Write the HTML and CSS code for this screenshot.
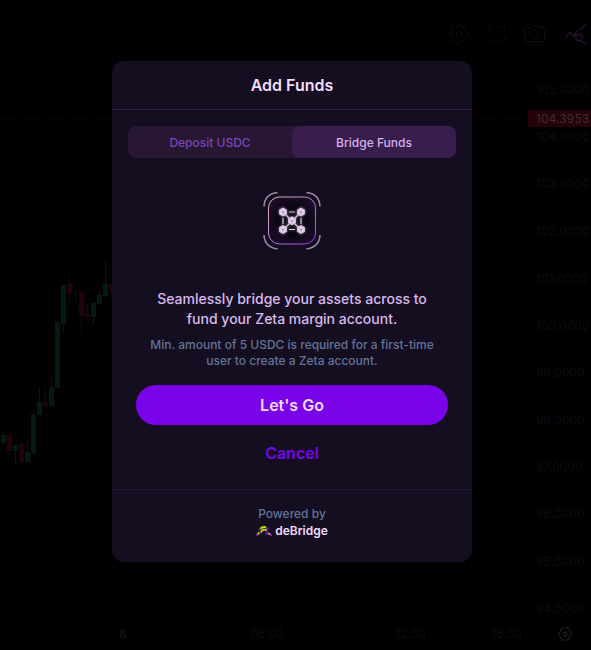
FILE: index.html
```html
<!DOCTYPE html>
<html lang="en">
<head>
<meta charset="utf-8">
<title>Add Funds</title>
<link rel="stylesheet" href="styles.css">
</head>
<body>
<svg class="chart" width="591" height="650" viewBox="0 0 591 650" aria-hidden="true">
  <path class="rule" d="M0 14.5H591M0 619.5H591"/>
  <g class="tool">
    <path d="M457.3 26.8l.4-2.3h2.6l.4 2.3 2.4 1 2-1.3 1.8 1.8-1.3 2 1 2.4 2.3.4v2.6l-2.3.4-1 2.4 1.3 2-1.8 1.8-2-1.3-2.4 1-.4 2.3h-2.6l-.4-2.3-2.4-1-2 1.3-1.8-1.8 1.3-2-1-2.4-2.3-.4v-2.6l2.3-.4 1-2.4-1.3-2 1.8-1.8 2 1.3z"/>
    <circle cx="459" cy="34" r="2.7"/>
    <path d="M494 26.500h-3.500q-1 0-1 1v3.500M500 26.500h3.500q1 0 1 1v3.500M489.500 37v3.500q0 1 1 1h3.500M504.500 37v3.500q0 1-1 1h-3.500"/>
    <path d="M526 27.500h4l1.500-2h6l1.500 2h4q1.500 0 1.500 1.500v11q0 1.500-1.500 1.500h-17q-1.500 0-1.500-1.500v-11q0-1.500 1.500-1.500z"/>
    <circle cx="534.5" cy="34.500" r="4.200"/>
  </g>
  <g class="insight">
    <path d="M565 39l4.500-6.500 4 4 4-6.500M579 31l6.500-6.500M581.500 40.500l4 3.500"/>
    <circle cx="579" cy="37.500" r="3.300"/>
  </g>
  <path class="price-line" d="M0 118.500H528"/>
  <rect class="price-tag" x="528" y="110" width="63" height="17"/>
  <g class="axis">
    <text x="536" y="94">105.0000</text>
    <text x="536" y="141">104.0000</text>
    <text x="536" y="188">103.0000</text>
    <text x="536" y="235">102.0000</text>
    <text x="536" y="283">101.0000</text>
    <text x="536" y="330">100.0000</text>
    <text x="536" y="377">99.0000</text>
    <text x="536" y="424">98.0000</text>
    <text x="536" y="471">97.0000</text>
    <text x="536" y="518">96.0000</text>
    <text x="536" y="566">95.0000</text>
    <text x="536" y="613">94.0000</text>
    <text x="250" y="638">06:00</text>
    <text x="395" y="638">12:00</text>
    <text x="491" y="638">16:00</text>
    <text class="day" x="119" y="638">8</text>
    <text class="current" x="536" y="123">104.3953</text>
  </g>
  <g class="up">
    <path d="M1 435h5v8h-5zM13 445h5v6h-5zM25 452h5v10h-5zM31 414h5v39h-5zM37 402h5v13h-5zM49 387h5v19h-5zM55 322h5v66h-5zM61 285h5v39h-5zM91 303h5v14h-5zM97 295h5v9h-5zM103 284h5v12h-5z"/>
    <path d="M3 432h1v12h-1zM15 445h1v20h-1zM27 438h1v24h-1zM33 410h1v43h-1zM39 388h1v27h-1zM51 377h1v29h-1zM57 321h1v68h-1zM63 285h1v46h-1zM93 303h1v22h-1zM99 291h1v14h-1zM105 261h1v36h-1z"/>
  </g>
  <g class="down">
    <path d="M7 435h5v16h-5zM19 444h5v18h-5zM43 402h5v4h-5zM67 284h5v9h-5zM73 292h5v1h-5zM79 292h5v24h-5zM85 314h5v3h-5zM109 284h5v7h-5z"/>
    <path d="M9 430h1v25h-1zM21 443h1v22h-1zM45 387h1v19h-1zM69 276h1v26h-1zM75 287h1v17h-1zM81 291h1v41h-1zM87 302h1v16h-1zM111 284h1v14h-1z"/>
  </g>
  <g class="axis-settings">
    <path d="M562 628h6l3.500 6-3.500 6h-6l-3.500-6z"/>
    <circle cx="565" cy="634" r="1.800"/>
  </g>
</svg>

<main class="modal">
  <header class="modal-header"><h1><span class="t-title">Add Funds</span></h1></header>
  <div class="tabs">
    <button class="tab"><span class="t-deposit">Deposit USDC</span></button>
    <button class="tab active"><span class="t-bridge">Bridge Funds</span></button>
  </div>
  <svg class="bridge-icon" width="60" height="60" viewBox="0 0 60 60" aria-hidden="true">
    <defs>
      <linearGradient id="edge" x1="0" y1="0" x2="1" y2="1">
        <stop offset="0" stop-color="#f4b8a8"/><stop offset=".45" stop-color="#b88ad0"/><stop offset="1" stop-color="#9a35f0"/>
      </linearGradient>
      <radialGradient id="core"><stop offset=".45" stop-color="#05020a"/><stop offset="1" stop-color="#180b25"/></radialGradient>
      <filter id="glow" x="-50%" y="-50%" width="200%" height="200%"><feGaussianBlur stdDeviation="1.500"/></filter>
      <g id="network">
        <path d="M21 21l18 18M39 21L21 39M27 21h6M27 38.500h6M21 27v6M39 27v6"/>
        <g class="nodes">
          <path id="node" d="M21 17.200l3.300 1.900v3.800L21 24.800l-3.300-1.900v-3.800z"/>
          <use href="#node" x="18"/><use href="#node" x="9" y="8.700"/><use href="#node" y="17.500"/><use href="#node" x="18" y="17.500"/>
        </g>
      </g>
    </defs>
    <rect x="6.500" y="6" width="47" height="47" rx="11" fill="url(#core)" stroke="url(#edge)"/>
    <path class="corners" d="M2 15.500Q2.500 3 15.500 1.500M44.500 1.500Q57.500 3 58 15.500M2 44Q2.500 56 15.500 58M44.500 58Q57.500 56 58 44"/>
    <use class="network halo" href="#network" filter="url(#glow)"/>
    <use class="network" href="#network"/>
    <path class="marks" d="M19.500 20.300l1.500.9 1.500-.9M21 21.200v1.800M37.500 20.300l1.500.9 1.500-.9M39 21.200v1.800M28.500 29l1.500.9 1.500-.9M30 29.900v1.800M19.500 37.800l1.500.9 1.500-.9M21 38.700v1.800M37.500 37.800l1.500.9 1.500-.9M39 38.700v1.800"/>
  </svg>
  <p class="lead"><span class="t-lead1">Seamlessly bridge your assets across to</span><br><span class="t-lead2">fund your Zeta margin account.</span></p>
  <p class="note"><span class="t-note1">Min. amount of 5 USDC is required for a first-time</span><br><span class="t-note2">user to create a Zeta account.</span></p>
  <div class="actions">
    <button class="primary"><span class="t-go">Let's Go</span></button>
    <button class="cancel"><span class="t-cancel">Cancel</span></button>
  </div>
  <footer class="modal-footer">
    <div class="powered"><span class="t-powered">Powered by</span></div>
    <div class="brand">
      <svg width="16" height="12" viewBox="0 0 16 12" aria-hidden="true">
        <path d="M4 4Q6 1.500 10 2.200M4.500 7.500l2-2.500q2.500-1 4.500.5M1.500 9.500l2-2.200M12 8l2 1.500" fill="none" stroke="#b8e000" stroke-width="1.900"/>
        <path d="M2.800 5.200l1.500-1.500M10.500 2.500l2 1.500M0 10h1.500M3.500 9l1.200-1.500M10.500 5.500v3h2M14 10h2" fill="none" stroke="#8211c9" stroke-width="1.900"/>
      </svg>
      <span class="t-brand">deBridge</span>
    </div>
  </footer>
</main>
</body>
</html>
```

FILE: styles.css
```css
* { box-sizing: border-box; }
body {
  margin: 0;
  height: 650px;
  overflow: hidden;
  background: #000;
  font-family: Inter, "Liberation Sans", sans-serif;
}
.chart { position: absolute; left: 0; top: 0; }
.rule { stroke: #050307; }
.tool { fill: none; stroke: #100919; stroke-width: 1; }
.insight { fill: none; stroke: #211027; stroke-width: 1.7; }
.price-line { stroke: #29040c; stroke-dasharray: 1 2; }
.price-tag { fill: #250208; }
.axis { fill: #0b0d12; font-size: 12px; letter-spacing: .1px; }
.axis .day { fill: #0c131b; font-weight: 600; }
.axis .current { fill: #3b3033; }
.up { fill: #041b13; }
.down { fill: #230209; }
.axis-settings { fill: none; stroke: #211e21; stroke-width: 1.2; }

.modal {
  position: relative;
  width: 360px;
  height: 501px;
  margin: 61px 0 0 112px;
  border-radius: 12px;
  background: #140e20;
  display: flex;
  flex-direction: column;
  text-align: center;
}
.modal-header {
  height: 49px;
  border-bottom: 1px solid #34213f;
}
h1 { margin: 0; font-size: 16px; line-height: 48px; font-weight: 600; color: #f2dcff; }
.tabs {
  display: flex;
  height: 32px;
  margin: 16px 16px 0;
  border-radius: 8px;
  background: #281733;
}
button { border: 0; padding: 0; font-family: inherit; background: none; }
.tab { flex: 1; border-radius: 8px; font-size: 12px; font-weight: 500; color: #7b46b5; }
.tab.active { background: #391e4d; color: #d2b1ec; }
.bridge-icon { align-self: center; margin-top: 33px; flex: none; }
.corners { fill: none; stroke: #9c8ca9; stroke-width: 1.5; }
.network { fill: #e6d4f2; stroke: #d6c3e3; stroke-width: 1.2; }
.halo { opacity: .65; }
.marks { fill: none; stroke: #8d779d; stroke-width: .8; }
p { margin: 0; white-space: nowrap; }
.lead { margin-top: 38px; font-size: 14px; line-height: 20px; font-weight: 500; color: #d9b9ee; }
.note { margin-top: 8px; font-size: 12px; line-height: 16px; font-weight: 500; color: #62749b; }
.actions { display: flex; flex-direction: column; margin: 16px 24px 0; gap: 8px; }
.actions button { height: 40px; border-radius: 20px; font-size: 16px; font-weight: 600; }
.primary { background: #7903e9; color: #f2dcff; }
.cancel { color: #7903e9; }
.modal-footer { margin-top: 16px; border-top: 1px solid #241832; padding-top: 16px; }
.powered { height: 16px; font-size: 12px; line-height: 16px; font-weight: 500; color: #62749b; }
.brand {
  display: flex;
  justify-content: center;
  align-items: center;
  gap: 3px;
  height: 17px;
  font-size: 12px;
  font-weight: 600;
  color: #f2dcff;
}
```
